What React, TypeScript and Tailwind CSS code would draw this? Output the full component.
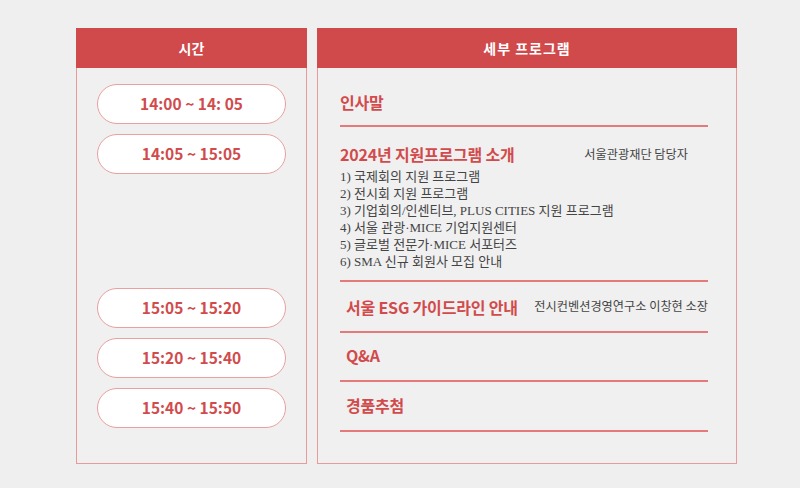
import React from "react";

const titleFont = { fontFamily: '"Noto Sans CJK KR", "Noto Sans", sans-serif' };

const times = [
  { t: "14:00 ~ 14: 05", mt: "mt-[16px]" },
  { t: "14:05 ~ 15:05", mt: "mt-[10px]" },
  { t: "15:05 ~ 15:20", mt: "mt-[114px]" },
  { t: "15:20 ~ 15:40", mt: "mt-[10px]" },
  { t: "15:40 ~ 15:50", mt: "mt-[10px]" },
];

const subs = [
  "1) 국제회의 지원 프로그램",
  "2) 전시회 지원 프로그램",
  "3) 기업회의/인센티브, PLUS CITIES 지원 프로그램",
  "4) 서울 관광·MICE 기업지원센터",
  "5) 글로벌 전문가·MICE 서포터즈",
  "6) SMA 신규 회원사 모집 안내",
];

function Title({ children }: { children: React.ReactNode }) {
  return (
    <span className="text-[16px] font-bold text-[#d24b4c] leading-[20px] tracking-[-0.2px]" style={titleFont}>
      {children}
    </span>
  );
}

export default function App() {
  return (
    <div className="w-[800px] h-[488px] bg-[#efefef] flex gap-[10px] pl-[76px] pt-[28px]">
      <div className="w-[231px] h-[436px] border border-[#e99a9a] bg-[#f0f0f0] flex flex-col items-center">
        <div
          className="w-[231px] -mx-px -mt-px h-[40px] bg-[#d04a4b] flex items-center justify-center text-white text-[14px] font-bold"
          style={titleFont}
        >
          시간
        </div>
        {times.map((x) => (
          <div
            key={x.t}
            className={`${x.mt} w-[189px] h-[40px] rounded-full bg-white border border-[#e8a0a0] flex items-center justify-center text-[15.5px] font-semibold text-[#d24b4c]`}
            style={titleFont}
          >
            {x.t}
          </div>
        ))}
      </div>
      <div className="w-[420px] h-[436px] border border-[#e99a9a] bg-[#f0f0f0] flex flex-col">
        <div
          className="-mx-px -mt-px h-[40px] bg-[#d04a4b] flex items-center justify-center text-white text-[14px] font-bold tracking-[1px]"
          style={titleFont}
        >
          세부 프로그램
        </div>
        <div className="pl-[22px] pr-[28px] flex flex-col">
          <div className="h-[59px] pt-[10px] flex items-center border-b-2 border-[#e57a7a]">
            <Title>인사말</Title>
          </div>
          <div className="h-[155px] flex flex-col border-b-2 border-[#e57a7a] pt-[17px]">
            <div className="flex items-center h-[20px]">
              <Title>2024년 지원프로그램 소개</Title>
              <span className="ml-auto mr-[20px] text-[12.2px] text-[#444]" style={titleFont}>
                서울관광재단 담당자
              </span>
            </div>
            <div
              className="mt-[4px] flex flex-col text-[13px] leading-[17px] text-[#444]"
              style={{ fontFamily: '"Liberation Serif", "Noto Sans CJK KR", serif' }}
            >
              {subs.map((s) => (
                <div key={s}>{s}</div>
              ))}
            </div>
          </div>
          <div className="h-[51px] flex items-center border-b-2 border-[#e57a7a] pl-[6px]">
            <Title>서울 ESG 가이드라인 안내</Title>
            <span className="ml-auto text-[12.2px] text-[#444]" style={titleFont}>
              전시컨벤션경영연구소 이창현 소장
            </span>
          </div>
          <div className="h-[49px] pb-[4px] flex items-center border-b-2 border-[#e57a7a] pl-[6px]">
            <Title>Q&amp;A</Title>
          </div>
          <div className="h-[50px] pb-[3px] flex items-center border-b-2 border-[#e57a7a] pl-[6px]">
            <Title>경품추첨</Title>
          </div>
        </div>
      </div>
    </div>
  );
}
